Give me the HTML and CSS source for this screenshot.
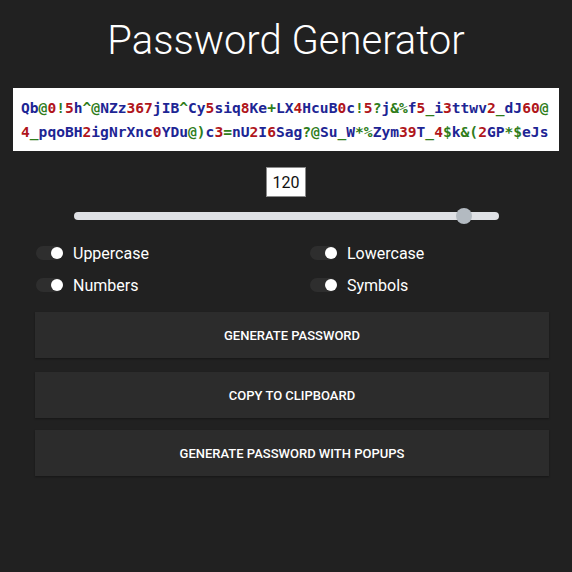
FILE: index.html
```html
<!DOCTYPE html>
<html lang="en">
<head>
<meta charset="utf-8">
<title>Password Generator</title>
<link rel="stylesheet" href="styles.css">
</head>
<body>
<main class="app">
  <h1 class="title">Password Generator</h1>
  <div class="output">
    <div class="pw-line"><span class="l">Qb</span><span class="s">@</span><span class="d">0</span><span class="s">!</span><span class="d">5</span><span class="l">h</span><span class="s">^@</span><span class="l">NZz</span><span class="d">367</span><span class="l">jIB</span><span class="s">^</span><span class="l">Cy</span><span class="d">5</span><span class="l">siq</span><span class="d">8</span><span class="l">Ke</span><span class="s">+</span><span class="l">LX</span><span class="d">4</span><span class="l">HcuB</span><span class="d">0</span><span class="l">c</span><span class="s">!</span><span class="d">5</span><span class="s">?</span><span class="l">j</span><span class="s">&amp;%</span><span class="l">f</span><span class="d">5</span><span class="s">_</span><span class="l">i</span><span class="d">3</span><span class="l">ttwv</span><span class="d">2</span><span class="s">_</span><span class="l">dJ</span><span class="d">60</span><span class="s">@</span></div>
    <div class="pw-line"><span class="d">4</span><span class="s">_</span><span class="l">pqoBH</span><span class="d">2</span><span class="l">igNrXnc</span><span class="d">0</span><span class="l">YDu</span><span class="s">@)</span><span class="l">c</span><span class="d">3</span><span class="s">=</span><span class="l">nU</span><span class="d">2</span><span class="l">I</span><span class="d">6</span><span class="l">Sag</span><span class="s">?@</span><span class="l">Su</span><span class="s">_</span><span class="l">W</span><span class="s">*%</span><span class="l">Zym</span><span class="d">39</span><span class="l">T</span><span class="s">_</span><span class="d">4</span><span class="s">$</span><span class="l">k</span><span class="s">&amp;(</span><span class="d">2</span><span class="l">GP</span><span class="s">*$</span><span class="l">eJs</span></div>
  </div>
  <div class="length">
    <input class="length-input" type="text" value="120">
    <input class="slider" type="range" min="8" max="128" value="120">
  </div>
  <div class="options">
    <label class="option"><span class="switch"><span class="knob"></span></span><span class="opt-label">Uppercase</span></label>
    <label class="option"><span class="switch"><span class="knob"></span></span><span class="opt-label">Lowercase</span></label>
    <label class="option"><span class="switch"><span class="knob"></span></span><span class="opt-label">Numbers</span></label>
    <label class="option"><span class="switch"><span class="knob"></span></span><span class="opt-label">Symbols</span></label>
  </div>
  <div class="actions">
    <button class="btn btn-first">Generate Password</button>
    <button class="btn btn-second">Copy to Clipboard</button>
    <button class="btn">Generate Password with Popups</button>
  </div>
</main>
</body>
</html>
```
FILE: styles.css
```css
* { box-sizing: border-box; }
html, body {
  margin: 0;
  padding: 0;
  background: #212121;
  height: 100%;
}
body {
  font-family: Roboto, "Liberation Sans", sans-serif;
  color: #ffffff;
}
.app {
  padding-top: 17px;
  display: flex;
  flex-direction: column;
  align-items: center;
}
.title {
  margin: 0;
  font-size: 40px;
  font-weight: 300;
  line-height: 47px;
  color: #ffffff;
  text-align: center;
}
.output {
  margin-top: 24px;
  width: 546px;
  height: 63px;
  background: #ffffff;
  padding: 8px 8px;
  font-family: "DejaVu Sans Mono", "Liberation Mono", monospace;
  font-weight: bold;
  font-size: 14.6px;
  line-height: 23.5px;
  overflow: hidden;
}
.pw-line {
  white-space: nowrap;
}
.l { color: #1d2594; }
.d { color: #b0151b; }
.s { color: #2f7d1b; }
.length {
  margin-top: 16px;
  display: flex;
  flex-direction: column;
  align-items: center;
}
.length-input {
  width: 40px;
  height: 30px;
  border: 1px solid #8a8a8a;
  background: #ffffff;
  color: #111111;
  font-family: Roboto, "Liberation Sans", sans-serif;
  font-size: 16px;
  text-align: center;
  padding: 0;
  margin: 0;
}
.slider {
  -webkit-appearance: none;
  appearance: none;
  margin: 11px 0 0 0;
  width: 425px;
  height: 16px;
  background: transparent;
  position: relative;
  left: 0.5px;
}
.slider::-webkit-slider-runnable-track {
  height: 8px;
  border-radius: 4px;
  background: #dfe1e5;
}
.slider::-webkit-slider-thumb {
  -webkit-appearance: none;
  appearance: none;
  width: 16px;
  height: 16px;
  border-radius: 50%;
  background: #b3bac1;
  margin-top: -4px;
  border: none;
}
.options {
  margin-top: 13px;
  width: 500px;
  display: grid;
  grid-template-columns: 274px 1fr;
  grid-auto-rows: 32px;
}
.option {
  display: flex;
  align-items: center;
  gap: 10px;
}
.switch {
  width: 27px;
  height: 14px;
  border-radius: 7px;
  background: #2e2e2e;
  display: flex;
  align-items: center;
  justify-content: flex-end;
}
.knob {
  width: 12px;
  height: 12px;
  border-radius: 50%;
  background: #ffffff;
}
.opt-label {
  font-size: 16px;
  color: #ffffff;
}
.actions {
  margin-top: 11px;
  width: 514px;
  margin-left: 12px;
  display: flex;
  flex-direction: column;
}
.btn {
  height: 46px;
  border: none;
  background: #2c2c2c;
  color: #ffffff;
  font-family: Roboto, "Liberation Sans", sans-serif;
  font-weight: 500;
  font-size: 13px;
  text-transform: uppercase;
  box-shadow: 0 1px 2px rgba(0, 0, 0, 0.35);
  padding: 0;
}
.btn-first { margin-bottom: 14px; }
.btn-second { margin-bottom: 12px; }
```
